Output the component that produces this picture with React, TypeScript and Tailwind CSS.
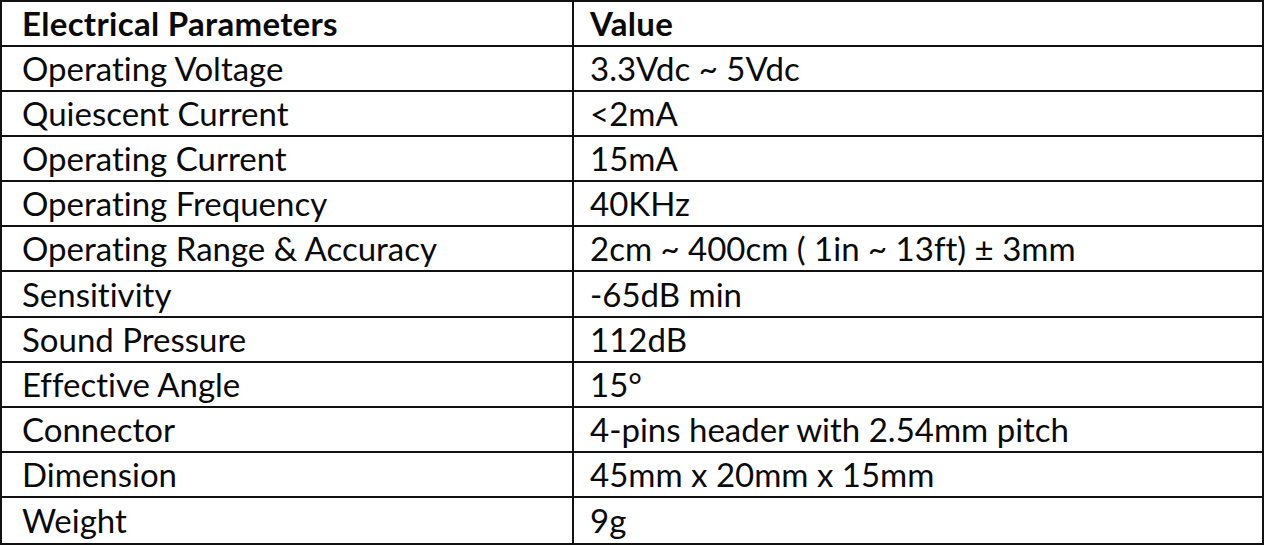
import React from "react";

const rows: [string, string][] = [
  ["Operating Voltage", "3.3Vdc ~ 5Vdc"],
  ["Quiescent Current", "<2mA"],
  ["Operating Current", "15mA"],
  ["Operating Frequency", "40KHz"],
  ["Operating Range & Accuracy", "2cm ~ 400cm ( 1in ~ 13ft) ± 3mm"],
  ["Sensitivity", "-65dB min"],
  ["Sound Pressure", "112dB"],
  ["Effective Angle", "15°"],
  ["Connector", "4-pins header with 2.54mm pitch"],
  ["Dimension", "45mm x 20mm x 15mm"],
  ["Weight", "9g"],
];

export default function App() {
  return (
    <div className="w-[1265px] h-[545px] bg-white">
      <div
        className="w-[1264px] h-[545px] border-2 border-[#111] grid grid-cols-[572px_1fr] grid-rows-[repeat(12,1fr)] text-[#0a0a0a] text-[33px] leading-none [font-variant-ligatures:none]"
        style={{ fontFamily: "Lato, 'Open Sans', sans-serif" }}
      >
        <div className="border-r-2 border-b-2 border-[#111] flex items-center pl-[20px] font-bold tracking-[0.3px]">
          Electrical Parameters
        </div>
        <div className="border-b-2 border-[#111] flex items-center pl-[16px] font-bold tracking-[0.3px]">
          Value
        </div>
        {rows.map(([k, v], i) => {
          const last = i === rows.length - 1;
          return (
            <React.Fragment key={k}>
              <div
                className={
                  last
                    ? "border-r-2 border-[#111] flex items-center pl-[20px]"
                    : "border-r-2 border-b-2 border-[#111] flex items-center pl-[20px]"
                }
              >
                {k}
              </div>
              <div
                className={
                  last
                    ? "flex items-center pl-[16px]"
                    : "border-b-2 border-[#111] flex items-center pl-[16px]"
                }
              >
                {v}
              </div>
            </React.Fragment>
          );
        })}
      </div>
    </div>
  );
}
